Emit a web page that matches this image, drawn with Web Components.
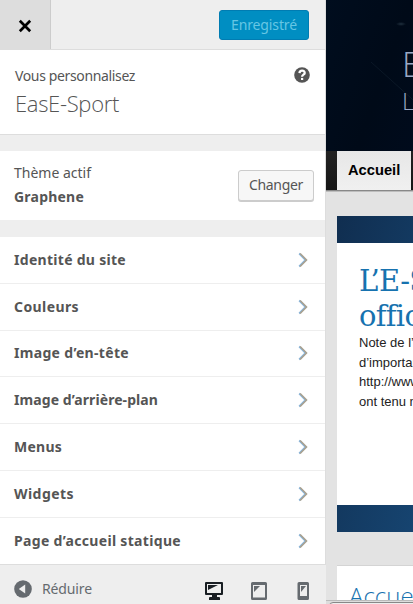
<!DOCTYPE html>
<html lang="fr">
<head>
<meta charset="utf-8">
<title>Personnaliser</title>
<style>
body{margin:0;width:413px;height:604px;overflow:hidden;font-family:"Noto Sans","Open Sans",sans-serif;font-size:14px;color:#555}
</style>
</head>
<body>
<customizer-app></customizer-app>
<script>
const define=(name,html,setup)=>customElements.define(name,class extends HTMLElement{
  connectedCallback(){
    if(this.shadowRoot)return;
    this.attachShadow({mode:'open'}).innerHTML=html;
    if(setup)setup(this,this.shadowRoot);
  }
});

// Single-line label whose tracking is adjusted to the width given in its "w" attribute.
define('fit-label',`<style>:host{display:block;white-space:nowrap;line-height:20px}span{display:inline-block}</style><span><slot></slot></span>`,(el,root)=>{
  const s=root.querySelector('span'),w=+el.getAttribute('w');
  const n=el.textContent.length;
  if(w)s.style.letterSpacing=((w-s.getBoundingClientRect().width)/n)+'px';
});

define('ui-button',`<style>
:host{display:flex;box-sizing:border-box;height:31px;padding:0 0 2px;border:1px solid #ccc;border-radius:3px;background:#f7f7f7;box-shadow:0 1px 0 #ccc;align-items:center;justify-content:center;color:#555}
:host([primary]){height:30px;background:#008ec2;border-color:#007cb2;box-shadow:none;color:#66c6e4;padding:0}
</style><slot></slot>`);

define('panel-header',`<style>
:host{display:flex;height:49px;background:#eee;border-bottom:1px solid #ddd}
.close{width:50px;background:#ddd;border-right:1px solid #ccc;display:grid;place-items:center}
.close svg{margin-top:3px}
ui-button{width:90px;margin:10px 16px 0 auto}
</style><div class="close"><svg width="14" height="14" viewBox="0 0 14 14"><path d="M1.800 1.800 12.200 12.200M12.200 1.800 1.800 12.200" stroke="#000" stroke-width="2.700"/></svg></div>
<ui-button primary><fit-label w="66">Enregistré</fit-label></ui-button>`);

define('panel-info',`<style>
:host{display:flex;height:84px;background:#fff;border-bottom:1px solid #ddd;justify-content:space-between}
.t{padding:16px 0 0 15px}
.name{font:300 22px/30px "Open Sans";margin-top:2px}
.name fit-label{line-height:30px}
svg{margin:17px 15px 0 0}
</style><div class="t"><fit-label w="120">Vous personnalisez</fit-label><div class="name"><fit-label w="104">EasE-Sport</fit-label></div></div>
<svg width="16" height="16" viewBox="0 0 16 16"><circle cx="8" cy="8" r="7.8" fill="#555"/><path d="M5.500 6.100C5.600 2.900 10.700 2.800 10.700 5.900 10.700 7.800 8.100 7.500 8.100 9.700" fill="none" stroke="#fff" stroke-width="2.300"/><path d="M7 10.900h2.200V13H7z" fill="#fff"/></svg>`);

define('theme-row',`<style>
:host{display:flex;height:69px;margin:16px 0 17px;background:#fff;justify-content:space-between}
.t{padding:12px 0 0 14px}
.b{font-weight:700;margin-top:4px}
ui-button{width:76px;margin:19px 11px 0 0}
</style><div class="t"><fit-label w="77">Thème actif</fit-label><fit-label class="b" w="70">Graphene</fit-label></div><ui-button><fit-label w="54">Changer</fit-label></ui-button>`);

define('section-row',`<style>
:host{display:flex;box-sizing:border-box;flex:0 0 46.8px;border-bottom:1px solid #eee;background:#fff;align-items:center;justify-content:space-between;padding:0 17px 0 14px;font-weight:700}
:host(:last-child){border-bottom:0}
</style><slot></slot><svg width="10" height="16" viewBox="0 0 10 16"><path d="M1.200 1.500 7.600 8 1.200 14.500" fill="none" stroke="#86b4dc" stroke-width="1.800"/><path d="M2.100 1.500 8.500 8 2.100 14.500" fill="none" stroke="#aaa18f" stroke-width="1.600"/></svg>`);

define('panel-footer',`<style>
:host{display:flex;box-sizing:border-box;width:326px;height:40px;background:#eee;border-top:1px solid #ddd;color:#656a6f;padding:14px 16px 0 14px;align-items:flex-start}
.c{margin-top:1px}
fit-label{margin:0 auto 0 10px}
.d{display:flex;margin-top:3px}
</style><svg class="c" width="18" height="18" viewBox="0 0 18 18"><circle cx="9" cy="9" r="8.8" fill="#656a6f"/><path d="M11.200 4.600v8.800L4.800 9z" fill="#eee"/></svg><fit-label w="50">Réduire</fit-label>
<div class="d"><svg width="105" height="18" viewBox="0 0 105 18">
<path fill="#191e23" fill-rule="evenodd" d="M1 0h16q1 0 1 1v11q0 1-1 1h-5v2h2q1 0 1 1v2H4v-2q0-1 1-1h2v-2H1q-1 0-1-1V1q0-1 1-1zM2 2v9h14V2z"/><path fill="#191e23" d="M3 3h10L3 8z"/>
<path fill="#656a6f" fill-rule="evenodd" d="M47.500 0h13q1.500 0 1.500 1.500v15q0 1.500-1.500 1.500h-13q-1.500 0-1.500-1.500v-15Q46 0 47.500 0zM48 3v12.500h12V3z"/><path fill="#656a6f" d="M49 4h6l-6 6z"/>
<path fill="#656a6f" fill-rule="evenodd" d="M94 0h8.500q1.500 0 1.500 1.500v15q0 1.500-1.500 1.500H94q-1.500 0-1.500-1.500v-15Q92.500 0 94 0zM95 3v11h7V3z"/><path fill="#656a6f" d="M96 4h5l-5 6z"/></svg></div>`);

define('side-panel',`<style>
:host{display:flex;flex-direction:column;width:326px;height:604px;background:#eee}
.body{width:325px;height:564px;border-right:1px solid #ddd;flex:none}
.list{display:flex;flex-direction:column;height:327px;background:#fff}
</style><div class="body"><panel-header></panel-header><panel-info></panel-info><theme-row></theme-row><div class="list">
<section-row><fit-label w="112">Identité du site</fit-label></section-row>
<section-row><fit-label w="65">Couleurs</fit-label></section-row>
<section-row><fit-label w="115">Image d’en-tête</fit-label></section-row>
<section-row><fit-label w="144">Image d’arrière-plan</fit-label></section-row>
<section-row><fit-label w="48">Menus</fit-label></section-row>
<section-row><fit-label w="60">Widgets</fit-label></section-row>
<section-row><fit-label w="167">Page d’accueil statique</fit-label></section-row>
</div></div><panel-footer></panel-footer>`);

define('site-banner',`<style>
:host{display:block;height:151px;overflow:hidden;white-space:nowrap;color:#9ba8c4;font-family:"Open Sans";font-weight:300;background:radial-gradient(ellipse 5px 2px at 75px 24px,#20303e,transparent),linear-gradient(42deg,transparent 49.500%,#0a1726 50.500%,transparent 51.500%) 45px 60px/50px 50px no-repeat,linear-gradient(110deg,#000d1e,#000a18 60%,#000b1c)}
.a{font-size:34px;line-height:40px;padding:44px 0 0 76px}
.b{font-size:24px;line-height:28px;padding:3px 0 0 76px}
</style><div class="a">EasE-Sport</div><div class="b">L’E-Sport</div>`);

define('site-nav',`<style>
:host{display:flex;height:39px;background:linear-gradient(#222,#151515);border-bottom:1px solid #888;box-shadow:0 1px 0 #bdbdbd;padding-left:11px}
a{display:block;box-sizing:border-box;width:74px;height:39px;padding-left:11px;background:linear-gradient(#e7e7e7,#f0f0f0);color:#000;font:bold 14.700px/38px "Liberation Sans",sans-serif}
</style><a>Accueil</a>`);

define('site-post',`<style>
:host{display:block;height:262px;margin:25px 0 0 11px;background:#fff;border:solid #123357;border-width:27px 0;border-image:linear-gradient(105deg,#102e50,#164470) 27 0;box-sizing:content-box;white-space:nowrap;overflow:hidden}
h2{margin:21px 0 0 22px;font:400 29px/35px "DejaVu Serif",serif;letter-spacing:-.7px;color:#1772af}
p{margin:-1px 0 0 22px;font:13px/19.600px "Liberation Sans",sans-serif;color:#222}
</style><h2>L’E-Sport<br>officiel</h2><p>Note de l’équipe<br>d’importants<br>http://www.ease<br>ont tenu nos</p>`);

define('site-preview',`<style>
:host{display:block;width:87px;height:604px;overflow:hidden;background:#e3e3e3;position:relative}
.w{margin:33px 0 0 11px;border-top:1px solid #d4d4d4;background:#fff;height:40px;overflow:hidden;white-space:nowrap;padding-left:12px;font:300 24px/36px "Open Sans";color:#1772af;padding-top:12px;box-sizing:border-box}
.s{position:absolute;left:0;right:0;top:600px;height:4px;overflow:hidden;background:#ddd;border-top:1px solid #bbb}
.s i{display:block;margin:1px -6px 0 3px;height:12px;border:1px solid #888;border-radius:4px;background:#eee}
</style><site-banner></site-banner><site-nav></site-nav><site-post></site-post><div class="w">Accueil</div><div class="s"><i></i></div>`);

define('customizer-app',`<style>:host{display:flex;width:413px;height:604px;overflow:hidden}side-panel,site-preview{flex:none}</style><side-panel></side-panel><site-preview></site-preview>`);
</script>
</body>
</html>
